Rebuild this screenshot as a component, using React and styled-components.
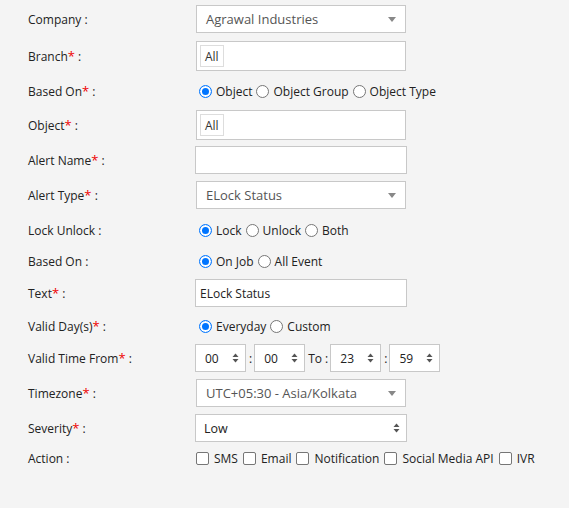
import React from "react";
import styled, { createGlobalStyle } from "styled-components";

const GlobalStyle = createGlobalStyle`
  html, body {
    margin: 0;
    padding: 0;
    background: #f4f4f4;
  }
  body {
    font-family: "Open Sans", "Liberation Sans", sans-serif;
    font-size: 12px;
    color: #222;
  }
`;

const rows = [
  { label: "Company", h: 38, type: "select", value: "Agrawal Industries" },
  { label: "Branch", req: true, h: 36, type: "tags", value: "All" },
  { label: "Based On", req: true, h: 34, type: "radio", options: ["Object", "Object Group", "Object Type"] },
  { label: "Object", req: true, h: 34, type: "tags", value: "All" },
  { label: "Alert Name", req: true, h: 36, type: "text", value: "" },
  { label: "Alert Type", req: true, h: 34, type: "select", value: "ELock Status" },
  { label: "Lock Unlock", h: 36, type: "radio", options: ["Lock", "Unlock", "Both"] },
  { label: "Based On", h: 26, type: "radio", options: ["On Job", "All Event"] },
  { label: "Text", req: true, h: 38, type: "text", value: "ELock Status" },
  { label: "Valid Day(s)", req: true, h: 28, type: "radio", options: ["Everyday", "Custom"] },
  { label: "Valid Time From", req: true, h: 36, type: "time" },
  { label: "Timezone", req: true, h: 34, type: "select", value: "UTC+05:30 - Asia/Kolkata" },
  { label: "Severity", req: true, h: 36, type: "native", value: "Low" },
  { label: "Action", h: 24, type: "check", options: ["SMS", "Email", "Notification", "Social Media API", "IVR"] },
];

const SpinArrows = () => (
  <svg width="7" height="10" viewBox="0 0 7 10">
    <path d="M3.5 0.5 L6.5 4 L0.5 4 Z" fill="#555" />
    <path d="M3.5 9.5 L6.5 6 L0.5 6 Z" fill="#555" />
  </svg>
);

const Control = ({ row }) => {
  switch (row.type) {
    case "select":
      return (
        <Select>
          <span>{row.value}</span>
          <Caret />
        </Select>
      );
    case "tags":
      return (
        <TagBox>
          <Tag>{row.value}</Tag>
        </TagBox>
      );
    case "text":
      return <TextBox>{row.value}</TextBox>;
    case "native":
      return (
        <NativeSelect>
          <span>{row.value}</span>
          <SpinArrows />
        </NativeSelect>
      );
    case "radio":
      return (
        <Options $pad={4}>
          {row.options.map((o, i) => (
            <Option key={o}>
              <Radio checked={i === 0} />
              {o}
            </Option>
          ))}
        </Options>
      );
    case "check":
      return (
        <Options $pad={1}>
          {row.options.map((o) => (
            <Option key={o} $gap={5} $after={5}>
              <Check />
              {o}
            </Option>
          ))}
        </Options>
      );
    case "time":
      return (
        <TimeRow>
          <Spinner>
            00
            <SpinArrows />
          </Spinner>
          <Sep>:</Sep>
          <Spinner>
            00
            <SpinArrows />
          </Spinner>
          <Sep>To :</Sep>
          <Spinner>
            23
            <SpinArrows />
          </Spinner>
          <Sep>:</Sep>
          <Spinner>
            59
            <SpinArrows />
          </Spinner>
        </TimeRow>
      );
    default:
      return null;
  }
};

const App = () => {
  return (
    <>
      <GlobalStyle />
      <Form>
        {rows.map((row, i) => (
          <Row key={i} $h={row.h}>
            <Label>
              {row.label}
              {row.req && <Star>*</Star>} :
            </Label>
            <Control row={row} />
          </Row>
        ))}
      </Form>
    </>
  );
};
export default App;

const Form = styled.div`
  width: 569px;
  height: 508px;
  padding-left: 28px;
  box-sizing: border-box;
  display: flex;
  flex-direction: column;
`;

const Row = styled.div`
  height: ${(p) => p.$h}px;
  display: flex;
  align-items: center;
`;

const Label = styled.div`
  width: 167px;
  flex-shrink: 0;
  font-size: 12px;
  color: #222;
`;

const Star = styled.span`
  color: #e00;
  font-size: 13px;
`;

const Box = styled.div`
  box-sizing: border-box;
  width: 211px;
  height: 28px;
  background: #fff;
  border: 1px solid #c8c8c8;
  display: flex;
  align-items: center;
`;

const Select = styled(Box)`
  margin-left: 1px;
  width: 210px;
  padding: 0 9px 0 9px;
  justify-content: space-between;
  font-size: 13px;
  color: #555;
`;

const Caret = styled.span`
  width: 0;
  height: 0;
  border-left: 4px solid transparent;
  border-right: 4px solid transparent;
  border-top: 5px solid #888;
`;

const TagBox = styled(Box)`
  margin-left: 1px;
  width: 210px;
  height: 30px;
  padding-left: 3px;
`;

const Tag = styled.span`
  box-sizing: border-box;
  height: 22px;
  padding: 0 4px;
  border: 1px solid #ddd;
  display: flex;
  align-items: center;
  font-size: 12px;
  color: #333;
`;

const TextBox = styled(Box)`
  width: 212px;
  padding-left: 4px;
  font-size: 12px;
  color: #222;
`;

const NativeSelect = styled(Box)`
  width: 212px;
  padding: 0 6px 0 8px;
  justify-content: space-between;
  font-size: 12.5px;
  color: #222;
`;

const Options = styled.div`
  display: flex;
  align-items: center;
  padding-left: ${(p) => p.$pad}px;
  font-size: 12px;
  color: #222;
`;

const Option = styled.label`
  display: flex;
  align-items: center;
  gap: ${(p) => p.$gap || 4}px;
  margin-right: ${(p) => p.$after || 4}px;
`;

const Radio = styled.span`
  box-sizing: border-box;
  width: 13px;
  height: 13px;
  border-radius: 50%;
  border: 1px solid ${(p) => (p.checked ? "#0075ff" : "#767676")};
  background: #fff;
  box-shadow: ${(p) => (p.checked ? "inset 0 0 0 2px #fff, inset 0 0 0 6px #0075ff" : "none")};
`;

const Check = styled.span`
  box-sizing: border-box;
  width: 13px;
  height: 13px;
  border-radius: 2px;
  border: 1px solid #767676;
  background: #fff;
`;

const TimeRow = styled.div`
  display: flex;
  align-items: center;
`;

const Spinner = styled(Box)`
  width: 51px;
  padding: 0 6px 0 9px;
  justify-content: space-between;
  font-size: 12px;
  color: #222;
`;

const Sep = styled.span`
  padding: 0 2px 0 3px;
  font-size: 12px;
  color: #222;
`;
